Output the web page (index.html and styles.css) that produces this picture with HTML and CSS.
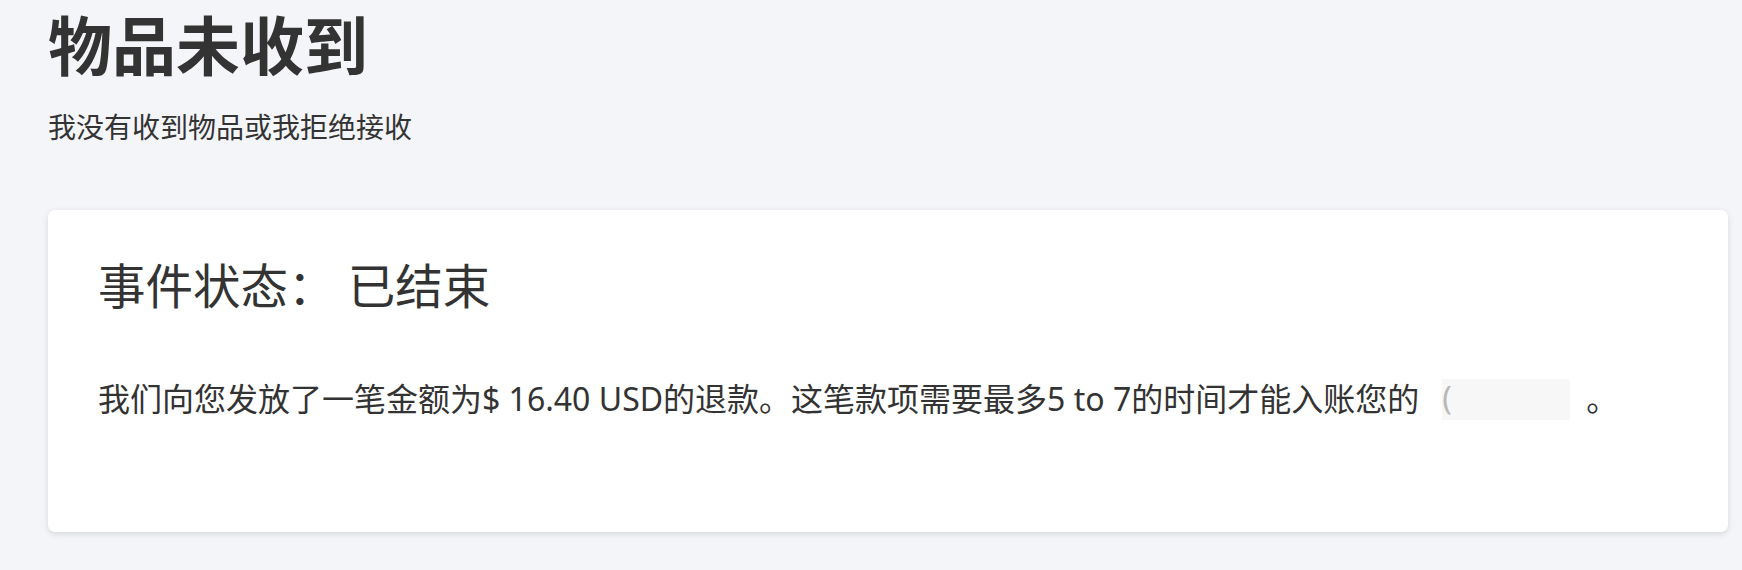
FILE: index.html
```html
<!DOCTYPE html>
<html lang="zh-CN">
<head>
<meta charset="utf-8">
<title>物品未收到</title>
<link rel="stylesheet" href="styles.css">
</head>
<body>
<main class="page">
  <h1 class="title">物品未收到</h1>
  <p class="subtitle">我没有收到物品或我拒绝接收</p>
  <section class="card">
    <h2 class="status">事件状态： 已结束</h2>
    <p class="message">我们向您发放了一笔金额为$ 16.40 USD的退款。这笔款项需要最多5 to 7的时间才能入账您的<span class="redacted"><span class="paren">(</span></span>。</p>
  </section>
</main>
</body>
</html>
```
FILE: styles.css
```css
html, body {
  margin: 0;
  padding: 0;
}
body {
  background: #f4f5f9;
  color: #333333;
  font-family: "Noto Sans", "Noto Sans CJK SC", sans-serif;
}
.page {
  padding: 0 14px 40px 48px;
}
.title {
  margin: 0;
  padding-top: 14px;
  font-size: 64px;
  font-weight: 700;
  line-height: 1;
}
.subtitle {
  margin: 35px 0 0;
  font-size: 28px;
  line-height: 1;
}
.card {
  margin-top: 69px;
  width: 1680px;
  height: 322px;
  box-sizing: border-box;
  padding: 52px 50px 0;
  background: #ffffff;
  border-radius: 7px;
  box-shadow: 0 2px 6px rgba(0, 0, 0, 0.12);
}
.status {
  margin: 0;
  font-size: 47.5px;
  font-weight: 400;
  line-height: 1;
}
.message {
  margin: 69px 0 0;
  font-size: 32px;
  line-height: 1;
}
.redacted {
  display: inline-block;
  width: 128px;
  height: 41px;
  margin: 0 16px 0 23px;
  vertical-align: -9px;
  background: #f7f7f7;
  overflow: hidden;
}
.paren {
  color: #b8b8b8;
  line-height: 38px;
}
```
